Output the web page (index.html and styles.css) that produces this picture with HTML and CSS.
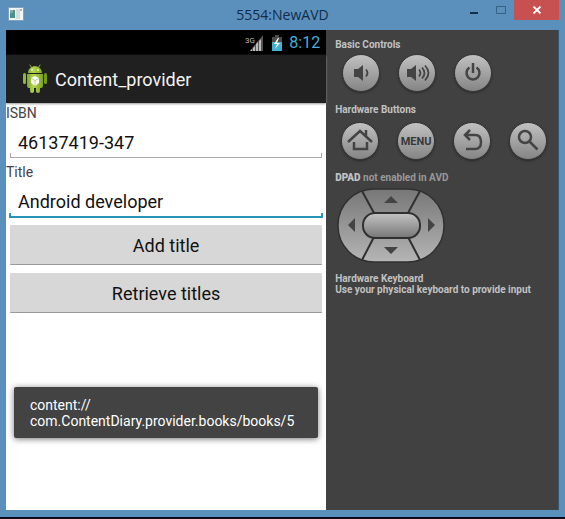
FILE: index.html
```html
<!DOCTYPE html>
<html lang="en">
<head>
<meta charset="utf-8">
<title>5554:NewAVD</title>
<link rel="stylesheet" href="styles.css">
</head>
<body>
<div class="window">
  <header class="titlebar">
    <svg class="app-icon" viewBox="0 0 16 14" aria-hidden="true">
      <path fill="#7fa3bb" d="M0 0h16v14H0z"/><path fill="#f4f6f4" d="M1 1h14v12H1z"/>
      <path fill="#4b9187" d="M2 3h5v8H2z"/><path fill="#87aaa2" d="M2 3h3v3H2z"/>
      <path fill="#d5dedd" d="M8 2h4v10H8z"/><path fill="#9fb5bb" d="M12 2h2v2h-2z"/>
    </svg>
    <h1 class="window-title">5554:NewAVD</h1>
    <div class="window-buttons">
      <button class="win-btn" aria-label="Minimize"><svg viewBox="0 0 10 8"><path fill="#132f49" d="M1 6h8v2H1z"/></svg></button>
      <button class="win-btn" aria-label="Maximize"><svg viewBox="0 0 10 8"><path fill="none" stroke="#356184" d="M.5.5h9v7h-9z"/></svg></button>
      <button class="win-btn close" aria-label="Close"><svg viewBox="0 0 10 8"><path fill="none" stroke="#fff" stroke-width="1.8" d="M1.5.5l7 7M8.5.5l-7 7"/></svg></button>
    </div>
  </header>
  <main class="emulator">
    <section class="phone">
      <div class="statusbar">
        <svg class="signal" viewBox="0 0 20 18" aria-hidden="true">
          <path fill="#555" d="M18 1v16H5z"/><path fill="#bbb" d="M5 17l2-2v2zM8 14l2-2v5H8zM11 10l2-2v9h-2zM14 7l2-2v12h-2z"/>
          <text class="network" x="0" y="9">3G</text>
        </svg>
        <svg class="battery" viewBox="0 0 10 16" aria-hidden="true">
          <path fill="#4b4b4b" d="M3 0h4v2h3v6H0V2h3z"/><path fill="#42b0d0" d="M0 7h10v9H0z"/>
          <path fill="#fff" d="M6 3L2 9h3l-2 5 5-6H5l2-5z"/>
        </svg>
        <span class="clock">8:12</span>
      </div>
      <div class="actionbar">
        <svg class="android" viewBox="0 0 24 30" aria-hidden="true">
          <defs><linearGradient id="green" x2="1"><stop stop-color="#7ba52a"/><stop offset=".4" stop-color="#b4d64c"/><stop offset="1" stop-color="#7ba325"/></linearGradient></defs>
          <path stroke="#8bb52c" stroke-linecap="round" d="M7 1l2 3M17 1l-2 3"/>
          <path fill="url(#green)" d="M5 9C5 0 19 0 19 9zM4 10h16v12q0 2-2 2h-1v3q0 2-2 2t-2-2v-3h-2v3q0 2-2 2t-2-2v-3H6q-2 0-2-2z"/>
          <rect x="0" y="9" width="3" height="11" rx="1.5" fill="#8fb92e"/><rect x="21" y="9" width="3" height="11" rx="1.5" fill="#739b20"/>
          <circle cx="9" cy="6" r="1" fill="#e9f3ce"/><circle cx="15" cy="6" r="1" fill="#e9f3ce"/>
          <path fill="#fff" d="M12 12l4 2v5l-4 3-4-3v-5z"/><path fill="none" stroke="#a3c173" stroke-width=".8" d="M8 14.500l4 2 4-2M12 16.500V22"/>
        </svg>
        <h2 class="app-title">Content_provider</h2>
      </div>
      <form class="form">
        <label for="isbn">ISBN</label>
        <div class="field"><input id="isbn" type="text" value="46137419-347"></div>
        <label for="title">Title</label>
        <div class="field active"><input id="title" type="text" value="Android developer"></div>
        <button type="button" class="action">Add title</button>
        <button type="button" class="action">Retrieve titles</button>
      </form>
      <div class="toast" role="status">content://<br>com.ContentDiary.provider.books/books/5</div>
    </section>
    <aside class="controls">
      <h3>Basic Controls</h3>
      <div class="keys basic">
        <button class="key" aria-label="Volume down"><svg viewBox="0 0 36 36"><path fill="#444" d="M11 14h4l5-4v16l-5-4h-4z"/><path class="line thin" d="M23 14.500q3 3.500 0 7"/></svg></button>
        <button class="key" aria-label="Volume up"><svg viewBox="0 0 36 36"><path fill="#444" d="M8 14h4l5-4v16l-5-4H8z"/><path class="line thin" d="M20 14.500q3 3.500 0 7M23 12.500q5 5.500 0 11M26 10.500q7 7.500 0 15"/></svg></button>
        <button class="key" aria-label="Power"><svg viewBox="0 0 36 36"><path class="line" d="M14.500 12.500a6.500 6.500 0 1 0 7 0M18 8v10"/></svg></button>
      </div>
      <h3>Hardware Buttons</h3>
      <div class="keys hardware">
        <button class="key" aria-label="Home"><svg viewBox="0 0 36 36"><path class="line" d="M6 19L18 8l12 11M24 13V7M12 19v7h13v-7"/></svg></button>
        <button class="key menu">MENU</button>
        <button class="key" aria-label="Back"><svg viewBox="0 0 36 36"><path class="line" d="M16 7l-5 5 5 5M11 12h10q6 0 6 7t-6 7h-9"/></svg></button>
        <button class="key" aria-label="Search"><svg viewBox="0 0 36 36"><circle class="line" cx="15" cy="14" r="6"/><path class="line" d="M19.500 18.500l8 8"/></svg></button>
      </div>
      <h3 class="muted"><strong>DPAD</strong> not enabled in AVD</h3>
      <svg class="dpad" viewBox="0 0 108 76" role="img" aria-label="Directional pad">
        <defs>
          <linearGradient id="pad" x2="0" y2="1"><stop stop-color="#777"/><stop offset="1" stop-color="#b5b5b5"/></linearGradient>
          <linearGradient id="center" x2="0" y2="1"><stop stop-color="#c4c4c4"/><stop offset="1" stop-color="#777"/></linearGradient>
        </defs>
        <rect x="1" y="2" width="106" height="73" rx="36" fill="url(#pad)" stroke="#303030" stroke-width="1.5"/>
        <path stroke="#303030" stroke-width="2" d="M25 4l12 22M83 4L71 26M37 50L25 73M71 50l12 23"/>
        <rect x="26" y="26" width="57" height="25" rx="12" fill="url(#center)" stroke="#303030" stroke-width="2"/>
        <path fill="#444" d="M54 9l7 7H47zM54 67l-7-7h14zM11 38l7-7v14zM98 38l-7-7v14z"/>
      </svg>
      <h3>Hardware Keyboard<br>Use your physical keyboard to provide input</h3>
    </aside>
  </main>
</div>
</body>
</html>
```
FILE: styles.css
```css
* { box-sizing: border-box; }
body { margin: 0; font-family: Roboto, sans-serif; background: #080d20; }
button, input { font: inherit; border: 0; padding: 0; }
h1, h2, h3 { margin: 0; font-weight: 400; }
.window { display: flex; flex-direction: column; height: 100vh; padding: 0 6px 7px 6px; background: #5b8fbc; border-bottom: 2px solid #080d20; }
.titlebar { display: grid; grid-template-columns: 1fr auto 1fr; flex: 0 0 30px; align-items: start; }
.app-icon { width: 16px; height: 14px; margin: 7px 0 0 2px; }
.window-title { font: 14px/30px "Open Sans", sans-serif; color: #102d49; }
.window-buttons { display: flex; justify-content: flex-end; }
.win-btn { width: 27px; height: 20px; background: none; }
.win-btn svg { display: block; width: 10px; height: 8px; margin: auto; }
.win-btn.close { width: 45px; background: #c75050; }
.emulator { display: flex; flex: 1; background: #414141; border-right: 1px solid #355877; }
.phone { position: relative; flex: 0 0 58%; background: #fff; }
.statusbar { display: flex; height: 25px; align-items: center; justify-content: flex-end; gap: 7px; padding-right: 6px; background: #000; }
.signal { width: 20px; height: 18px; }
.network { font-size: 8px; fill: #bbb; }
.battery { width: 10px; height: 16px; }
.clock { font-size: 16px; color: #42b0d9; }
.actionbar { display: flex; height: 48px; align-items: center; gap: 8px; padding-left: 17px; background: #202020; box-shadow: 0 1px 2px #999; }
.android { width: 24px; height: 30px; }
.app-title { font-size: 18px; color: #f4f4f4; }
.form { display: flex; flex-direction: column; padding-bottom: 4px; }
.form label { font-size: 14px; line-height: 20px; color: #444; }
.field { height: 39px; padding: 5px 4px 4px; }
.field input { display: block; width: 100%; height: 30px; padding: 0 8px; font-size: 18px; color: #111; outline: 0; background: linear-gradient(#aaa, #aaa) left bottom / 1px 4px no-repeat, linear-gradient(#aaa, #aaa) right bottom / 1px 4px no-repeat; border-bottom: 1px solid #aaa; }
.field.active { padding: 4px 3px 3px; }
.field.active input { height: 32px; padding: 0 9px; background: linear-gradient(#2795b5, #2795b5) left bottom / 2px 3px no-repeat, linear-gradient(#2795b5, #2795b5) right bottom / 2px 3px no-repeat; border-bottom: 2px solid #2795b5; }
.action { height: 40px; margin: 4px; padding-top: 2px; background: #d7d7d7; border-bottom: 1px solid #999; border-radius: 1px; font-size: 18px; color: #111; }
.toast { position: absolute; left: 8px; right: 8px; bottom: 72px; padding: 10px 16px 9px; font-size: 14px; line-height: 16px; color: #fff; background: #424342; border-radius: 2px; box-shadow: 0 1px 6px #777; }
.controls { flex: 1; padding: 9px 0 0 9px; color: #c2c2c2; }
.controls h3 { font-size: 10px; line-height: 11px; font-weight: 700; }
.controls .muted { color: #999; }
.muted strong { color: #c2c2c2; }
.keys { display: flex; gap: 18px; }
.basic { padding: 4px 0 12px 7px; }
.hardware { padding: 7px 0 12px 6px; }
.key { width: 38px; height: 38px; border: 1px solid #383838; border-radius: 50%; background: linear-gradient(#c1c1c1, #858585); color: #383838; box-shadow: 0 1px 2px #282828; }
.key svg { display: block; width: 36px; height: 36px; }
.menu { font-size: 11px; font-weight: 700; }
.line { fill: none; stroke: #444; stroke-width: 2.500; }
.thin { stroke-width: 1.800; }
.dpad { display: block; width: 108px; height: 76px; margin: 4px 0 10px 2px; }
```
